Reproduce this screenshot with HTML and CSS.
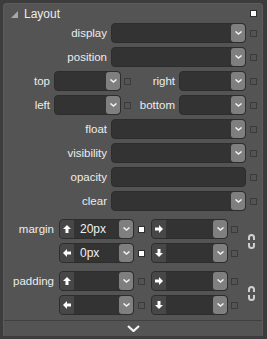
FILE: index.html
```html
<!DOCTYPE html>
<html lang="en">
<head>
    <meta charset="UTF-8">
    <title>Layout</title>
    <link rel="stylesheet" href="styles.css">
</head>
<body>

    <div class="panel">
        <!-- header -->
        <div class="head">
            <svg class="twisty" width="7" height="7" viewBox="0 0 7 7"><polygon points="7,0 7,7 0,7" fill="#a8a8a8"/></svg>
            <span class="title">Layout</span>
            <span class="pin"></span>
        </div>

        <div class="rows">
            <div class="row">
                <label class="lbl wide">display</label>
                <div class="sel full"><span class="val"></span><span class="btn"><svg width="7" height="4" viewBox="0 0 7 4"><polyline points="0.5,0.5 3.5,3 6.5,0.5" fill="none" stroke="#f2f2f2" stroke-width="1.5"/></svg></span></div>
                <span class="chk"></span>
            </div>
            <div class="row">
                <label class="lbl wide">position</label>
                <div class="sel full"><span class="val"></span><span class="btn"><svg width="7" height="4" viewBox="0 0 7 4"><polyline points="0.5,0.5 3.5,3 6.5,0.5" fill="none" stroke="#f2f2f2" stroke-width="1.5"/></svg></span></div>
                <span class="chk"></span>
            </div>
            <div class="row">
                <label class="lbl half1">top</label>
                <div class="sel half"><span class="val"></span><span class="btn"><svg width="7" height="4" viewBox="0 0 7 4"><polyline points="0.5,0.5 3.5,3 6.5,0.5" fill="none" stroke="#f2f2f2" stroke-width="1.5"/></svg></span></div>
                <span class="chk mid"></span>
                <label class="lbl half2">right</label>
                <div class="sel half"><span class="val"></span><span class="btn"><svg width="7" height="4" viewBox="0 0 7 4"><polyline points="0.5,0.5 3.5,3 6.5,0.5" fill="none" stroke="#f2f2f2" stroke-width="1.5"/></svg></span></div>
                <span class="chk"></span>
            </div>
            <div class="row">
                <label class="lbl half1">left</label>
                <div class="sel half"><span class="val"></span><span class="btn"><svg width="7" height="4" viewBox="0 0 7 4"><polyline points="0.5,0.5 3.5,3 6.5,0.5" fill="none" stroke="#f2f2f2" stroke-width="1.5"/></svg></span></div>
                <span class="chk mid"></span>
                <label class="lbl half2">bottom</label>
                <div class="sel half"><span class="val"></span><span class="btn"><svg width="7" height="4" viewBox="0 0 7 4"><polyline points="0.5,0.5 3.5,3 6.5,0.5" fill="none" stroke="#f2f2f2" stroke-width="1.5"/></svg></span></div>
                <span class="chk"></span>
            </div>
            <div class="row">
                <label class="lbl wide">float</label>
                <div class="sel full"><span class="val"></span><span class="btn"><svg width="7" height="4" viewBox="0 0 7 4"><polyline points="0.5,0.5 3.5,3 6.5,0.5" fill="none" stroke="#f2f2f2" stroke-width="1.5"/></svg></span></div>
                <span class="chk"></span>
            </div>
            <div class="row">
                <label class="lbl wide">visibility</label>
                <div class="sel full"><span class="val"></span><span class="btn"><svg width="7" height="4" viewBox="0 0 7 4"><polyline points="0.5,0.5 3.5,3 6.5,0.5" fill="none" stroke="#f2f2f2" stroke-width="1.5"/></svg></span></div>
                <span class="chk"></span>
            </div>
            <div class="row">
                <label class="lbl wide">opacity</label>
                <div class="sel full"><span class="val"></span></div>
                <span class="chk"></span>
            </div>
            <div class="row">
                <label class="lbl wide">clear</label>
                <div class="sel full"><span class="val"></span><span class="btn"><svg width="7" height="4" viewBox="0 0 7 4"><polyline points="0.5,0.5 3.5,3 6.5,0.5" fill="none" stroke="#f2f2f2" stroke-width="1.5"/></svg></span></div>
                <span class="chk"></span>
            </div>

            <!-- margin -->
            <div class="group">
                <label class="lbl side">margin</label>
                <div class="pair">
                    <div class="row">
                        <div class="sel box"><span class="dir"><svg width="8" height="8" viewBox="0 0 8 8"><path d="M4 0 L8 4 L5.5 4 L5.5 8 L2.5 8 L2.5 4 L0 4 Z" fill="#fff"/></svg></span><span class="val">20px</span><span class="btn"><svg width="7" height="4" viewBox="0 0 7 4"><polyline points="0.5,0.5 3.5,3 6.5,0.5" fill="none" stroke="#f2f2f2" stroke-width="1.5"/></svg></span></div>
                        <span class="chk on"></span>
                        <div class="sel box r"><span class="dir"><svg width="8" height="8" viewBox="0 0 8 8"><path d="M8 4 L4 0 L4 2.5 L0 2.5 L0 5.5 L4 5.5 L4 8 Z" fill="#fff"/></svg></span><span class="val"></span><span class="btn"><svg width="7" height="4" viewBox="0 0 7 4"><polyline points="0.5,0.5 3.5,3 6.5,0.5" fill="none" stroke="#f2f2f2" stroke-width="1.5"/></svg></span></div>
                        <span class="chk"></span>
                    </div>
                    <div class="row">
                        <div class="sel box"><span class="dir"><svg width="8" height="8" viewBox="0 0 8 8"><path d="M0 4 L4 0 L4 2.5 L8 2.5 L8 5.5 L4 5.5 L4 8 Z" fill="#fff"/></svg></span><span class="val">0px</span><span class="btn"><svg width="7" height="4" viewBox="0 0 7 4"><polyline points="0.5,0.5 3.5,3 6.5,0.5" fill="none" stroke="#f2f2f2" stroke-width="1.5"/></svg></span></div>
                        <span class="chk on"></span>
                        <div class="sel box r"><span class="dir"><svg width="8" height="8" viewBox="0 0 8 8"><path d="M4 8 L8 4 L5.5 4 L5.5 0 L2.5 0 L2.5 4 L0 4 Z" fill="#fff"/></svg></span><span class="val"></span><span class="btn"><svg width="7" height="4" viewBox="0 0 7 4"><polyline points="0.5,0.5 3.5,3 6.5,0.5" fill="none" stroke="#f2f2f2" stroke-width="1.5"/></svg></span></div>
                        <span class="chk"></span>
                    </div>
                </div>
                <svg class="link" width="7" height="15" viewBox="0 0 7 15"><path d="M1 6 V3.5 A2.5 2.5 0 0 1 6 3.5 V6" fill="none" stroke="#cfcfcf" stroke-width="2"/><path d="M1 9 V11.5 A2.5 2.5 0 0 0 6 11.5 V9" fill="none" stroke="#cfcfcf" stroke-width="2"/></svg>
            </div>

            <!-- padding -->
            <div class="group">
                <label class="lbl side">padding</label>
                <div class="pair">
                    <div class="row">
                        <div class="sel box"><span class="dir"><svg width="8" height="8" viewBox="0 0 8 8"><path d="M4 0 L8 4 L5.5 4 L5.5 8 L2.5 8 L2.5 4 L0 4 Z" fill="#fff"/></svg></span><span class="val"></span><span class="btn"><svg width="7" height="4" viewBox="0 0 7 4"><polyline points="0.5,0.5 3.5,3 6.5,0.5" fill="none" stroke="#f2f2f2" stroke-width="1.5"/></svg></span></div>
                        <span class="chk"></span>
                        <div class="sel box r"><span class="dir"><svg width="8" height="8" viewBox="0 0 8 8"><path d="M8 4 L4 0 L4 2.5 L0 2.5 L0 5.5 L4 5.5 L4 8 Z" fill="#fff"/></svg></span><span class="val"></span><span class="btn"><svg width="7" height="4" viewBox="0 0 7 4"><polyline points="0.5,0.5 3.5,3 6.5,0.5" fill="none" stroke="#f2f2f2" stroke-width="1.5"/></svg></span></div>
                        <span class="chk"></span>
                    </div>
                    <div class="row">
                        <div class="sel box"><span class="dir"><svg width="8" height="8" viewBox="0 0 8 8"><path d="M0 4 L4 0 L4 2.5 L8 2.5 L8 5.5 L4 5.5 L4 8 Z" fill="#fff"/></svg></span><span class="val"></span><span class="btn"><svg width="7" height="4" viewBox="0 0 7 4"><polyline points="0.5,0.5 3.5,3 6.5,0.5" fill="none" stroke="#f2f2f2" stroke-width="1.5"/></svg></span></div>
                        <span class="chk"></span>
                        <div class="sel box r"><span class="dir"><svg width="8" height="8" viewBox="0 0 8 8"><path d="M4 8 L8 4 L5.5 4 L5.5 0 L2.5 0 L2.5 4 L0 4 Z" fill="#fff"/></svg></span><span class="val"></span><span class="btn"><svg width="7" height="4" viewBox="0 0 7 4"><polyline points="0.5,0.5 3.5,3 6.5,0.5" fill="none" stroke="#f2f2f2" stroke-width="1.5"/></svg></span></div>
                        <span class="chk"></span>
                    </div>
                </div>
                <svg class="link" width="7" height="15" viewBox="0 0 7 15"><path d="M1 6 V3.5 A2.5 2.5 0 0 1 6 3.5 V6" fill="none" stroke="#cfcfcf" stroke-width="2"/><path d="M1 9 V11.5 A2.5 2.5 0 0 0 6 11.5 V9" fill="none" stroke="#cfcfcf" stroke-width="2"/></svg>
            </div>
        </div>

        <!-- footer / expand -->
        <div class="foot">
            <svg width="13" height="7" viewBox="0 0 13 7"><polyline points="1,1 6.5,6 12,1" fill="none" stroke="#f4f4f4" stroke-width="2.2"/></svg>
        </div>
    </div>

</body>
</html>
```

FILE: styles.css
```css
body { margin: 0; padding: 3px 4px 3px 3px; background: #3c3c3c; font-family: "Liberation Sans", Arial, sans-serif; font-size: 11.5px; color: #ececec; }
.panel { width: 260px; height: 333px; box-sizing: border-box; background: #545454; border: 1px solid #5c5c5c; border-bottom: none; border-radius: 4px 4px 0 0; display: flex; flex-direction: column; }
.head { height: 19px; display: flex; align-items: center; padding: 0 0 0 7px; }
.twisty { margin-top: 1px; }
.title { margin-left: 6px; font-size: 12px; color: #ececec; flex: 1; }
.pin { width: 5px; height: 5px; background: #fff; border: 1px solid #2e2e2e; margin-right: 5px; margin-top: -1px; }
.rows { display: flex; flex-direction: column; gap: 4px; padding-left: 0; }
.row { display: flex; align-items: center; height: 20px; }
.lbl { text-align: right; box-sizing: border-box; line-height: 20px; white-space: nowrap; }
.lbl.wide { width: 103px; margin-right: 4px; }
.lbl.half1 { width: 46px; margin-right: 4px; }
.lbl.half2 { width: 44px; margin-right: 4px; }
.lbl.side { width: 50px; margin-right: 5px; align-self: flex-start; }
.sel { height: 20px; box-sizing: border-box; background: #333; border: 1px solid #2d2d2d; border-radius: 4px; display: flex; overflow: hidden; }
.sel.full { width: 135px; }
.sel.half { width: 67px; }
.sel.box { width: 75px; }
.sel.box.r { width: 77px; margin-left: 6px; }
.val { flex: 1; line-height: 18px; padding-left: 7px; color: #f0f0f0; font-size: 12px; }
.btn { width: 14px; background: #7f7f7f; border-radius: 3px; display: flex; align-items: center; justify-content: center; }
.dir { width: 14px; background: #474747; display: flex; align-items: center; justify-content: center; }
.dir + .val { padding-left: 6px; }
.chk { width: 7px; height: 7px; box-sizing: border-box; border: 1px solid #3b3b3b; margin-left: 4px; }
.chk.mid { margin-left: 3px; }
.chk.on { background: #fff; border-color: #2e2e2e; }
.sel.box.r + .chk { margin-left: 3px; }
.group { display: flex; margin-top: 4px; padding-left: 0; }
.pair { display: flex; flex-direction: column; gap: 4px; }
.link { align-self: center; margin-left: 10px; }
.foot { margin-top: auto; height: 15px; border-top: 1px solid #404040; display: flex; align-items: center; justify-content: center; }
```
